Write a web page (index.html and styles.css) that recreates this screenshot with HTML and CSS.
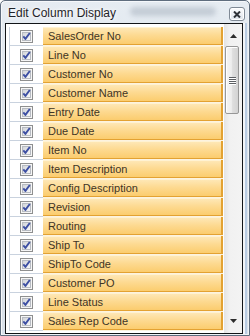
FILE: index.html
```html
<!DOCTYPE html>
<html>
<head>
<meta charset="utf-8">
<title>Edit Column Display</title>
<link rel="stylesheet" href="styles.css">
</head>
<body>
<svg class="defs" width="0" height="0" aria-hidden="true">
  <defs>
    <linearGradient id="cbfill" x1="0" y1="0" x2="1" y2="1">
      <stop offset="0" stop-color="#cfd2d6"/>
      <stop offset="1" stop-color="#fbfbfb"/>
    </linearGradient>
    <symbol id="cb" viewBox="0 0 13 13">
      <rect x="0.5" y="0.5" width="12" height="12" fill="#f6f6f6" stroke="#8e8f8f"/>
      <rect x="2.5" y="2.5" width="8" height="8" fill="url(#cbfill)" stroke="#b7bbc2"/>
      <path d="M3.3 6.4 L5.4 8.9 L9.8 3" fill="none" stroke="#3d4fa3" stroke-width="1.9" stroke-linejoin="round"/>
    </symbol>
  </defs>
</svg>
<div class="window">
  <div class="titlebar">
    <span class="title">Edit Column Display</span>
    <span class="glow"></span>
    <span class="close">
      <svg width="8" height="7" viewBox="0 0 8 7"><path d="M1 0.5 L7 6.5 M7 0.5 L1 6.5" stroke="#2f3338" stroke-width="2"/></svg>
    </span>
  </div>
  <div class="listbox">
    <div class="grid">
      <div class="row"><div class="chk"><svg class="cb"><use href="#cb"/></svg></div><div class="name">SalesOrder No</div></div>
      <div class="row"><div class="chk"><svg class="cb"><use href="#cb"/></svg></div><div class="name">Line No</div></div>
      <div class="row"><div class="chk"><svg class="cb"><use href="#cb"/></svg></div><div class="name">Customer No</div></div>
      <div class="row"><div class="chk"><svg class="cb"><use href="#cb"/></svg></div><div class="name">Customer Name</div></div>
      <div class="row"><div class="chk"><svg class="cb"><use href="#cb"/></svg></div><div class="name">Entry Date</div></div>
      <div class="row"><div class="chk"><svg class="cb"><use href="#cb"/></svg></div><div class="name">Due Date</div></div>
      <div class="row"><div class="chk"><svg class="cb"><use href="#cb"/></svg></div><div class="name">Item No</div></div>
      <div class="row"><div class="chk"><svg class="cb"><use href="#cb"/></svg></div><div class="name">Item Description</div></div>
      <div class="row"><div class="chk"><svg class="cb"><use href="#cb"/></svg></div><div class="name">Config Description</div></div>
      <div class="row"><div class="chk"><svg class="cb"><use href="#cb"/></svg></div><div class="name">Revision</div></div>
      <div class="row"><div class="chk"><svg class="cb"><use href="#cb"/></svg></div><div class="name">Routing</div></div>
      <div class="row"><div class="chk"><svg class="cb"><use href="#cb"/></svg></div><div class="name">Ship To</div></div>
      <div class="row"><div class="chk"><svg class="cb"><use href="#cb"/></svg></div><div class="name">ShipTo Code</div></div>
      <div class="row"><div class="chk"><svg class="cb"><use href="#cb"/></svg></div><div class="name">Customer PO</div></div>
      <div class="row"><div class="chk"><svg class="cb"><use href="#cb"/></svg></div><div class="name">Line Status</div></div>
      <div class="row"><div class="chk"><svg class="cb"><use href="#cb"/></svg></div><div class="name">Sales Rep Code</div></div>
    </div>
    <div class="scrollbar">
      <div class="sb-btn up">
        <svg width="7" height="4" viewBox="0 0 7 4"><path d="M0 4 L3.5 0 L7 4 Z" fill="#2c2c2c"/></svg>
      </div>
      <div class="track">
        <div class="thumb">
          <span class="grip"></span><span class="grip"></span><span class="grip"></span><span class="grip"></span>
        </div>
      </div>
      <div class="sb-btn down">
        <svg width="7" height="4" viewBox="0 0 7 4"><path d="M0 0 L7 0 L3.5 4 Z" fill="#2c2c2c"/></svg>
      </div>
    </div>
  </div>
</div>
</body>
</html>
```
FILE: styles.css
```css
* { box-sizing: border-box; }
html, body { margin: 0; padding: 0; }
body {
  width: 250px;
  height: 336px;
  overflow: hidden;
  font-family: "Liberation Sans", Arial, sans-serif;
  background: #ffffff;
}
.defs { position: absolute; width: 0; height: 0; }

.window {
  width: 250px;
  height: 336px;
  border: 1px solid #5f6d7e;
  border-radius: 5px 5px 0 0;
  padding: 0 6px 1px 4px;
  background: linear-gradient(to bottom, #e6ecf2 0%, #dbe3ec 40%, #d9e1ea 100%);
  box-shadow: inset 1px 1px 0 #f6f8fb, inset -1px -1px 0 #eef2f6;
  display: flex;
  flex-direction: column;
}

.titlebar {
  height: 22px;
  display: flex;
  align-items: flex-start;
  padding-left: 3px;
}
.title {
  margin-top: 5px;
  font-size: 12px;
  line-height: 14px;
  color: #1f2328;
  white-space: nowrap;
  text-shadow: 0 0 6px #ffffff, 0 0 3px #ffffff;
}
.glow {
  margin: 6px 0 0 14px;
  width: 86px;
  height: 9px;
  border-radius: 5px;
  background: #b9c2cd;
  opacity: 0.75;
  filter: blur(2.5px);
}
.close {
  margin-left: auto;
  margin-right: -2px;
  margin-top: 6px;
  width: 16px;
  height: 14px;
  border: 1px solid #7f8995;
  border-radius: 3px;
  background: linear-gradient(to bottom, #fbfcfd 0%, #eef1f5 50%, #dde3ea 100%);
  box-shadow: inset 0 0 0 1px #ffffff;
  display: flex;
  align-items: center;
  justify-content: center;
}

.listbox {
  width: 238px;
  height: 311px;
  border: 1px solid #111417;
  background: #ffffff;
  display: flex;
  box-shadow: 2px 0 0 #f3f6f9, 4px 0 0 #b9cce3;
}

.grid {
  width: 218px;
  padding-top: 3px;
  display: flex;
  flex-direction: column;
}
.row {
  height: 19px;
  display: flex;
  flex: none;
}
.chk {
  margin-left: 3px;
  width: 34px;
  height: 19px;
  border-left: 1px solid #c9d2de;
  border-bottom: 1px solid #c9d2de;
  display: flex;
  align-items: center;
  justify-content: center;
}
.cb {
  width: 13px;
  height: 13px;
  display: block;
}
.name {
  width: 180px;
  height: 19px;
  border-bottom: 1px solid #fcf3e0;
  background: linear-gradient(to bottom, #fee9ba 0%, #fdda92 45%, #fbcb6a 100%);
  background-clip: padding-box;
  box-shadow: inset -2px -1px 0 #e3a232, inset 0 1px 0 #fff2d2;
  padding-left: 5px;
  font-size: 11px;
  line-height: 18px;
  color: #3e3425;
  white-space: nowrap;
  overflow: hidden;
}

.scrollbar {
  width: 18px;
  display: flex;
  flex-direction: column;
  background: linear-gradient(to right, #e4e4e4 0%, #f1f1f1 30%, #f3f3f3 100%);
}
.sb-btn {
  height: 19px;
  flex: none;
  display: flex;
  justify-content: center;
  padding-left: 1px;
}
.sb-btn.up { padding-top: 10px; }
.sb-btn.down { padding-top: 5px; }
.sb-btn svg { display: block; }
.track {
  flex: 1;
  padding: 3px 2px 0 1px;
}
.thumb {
  width: 14px;
  height: 68px;
  border: 1px solid #979797;
  border-radius: 2px;
  background: linear-gradient(to right, #f6f6f6 0%, #ededed 45%, #dedede 55%, #d3d3d3 100%);
  box-shadow: inset 1px 1px 0 #ffffff;
  display: flex;
  flex-direction: column;
  align-items: center;
  justify-content: center;
  gap: 1px;
}
.grip {
  width: 7px;
  height: 1px;
  background: #5c5f63;
  box-shadow: 0 1px 0 #ffffff;
}
```
